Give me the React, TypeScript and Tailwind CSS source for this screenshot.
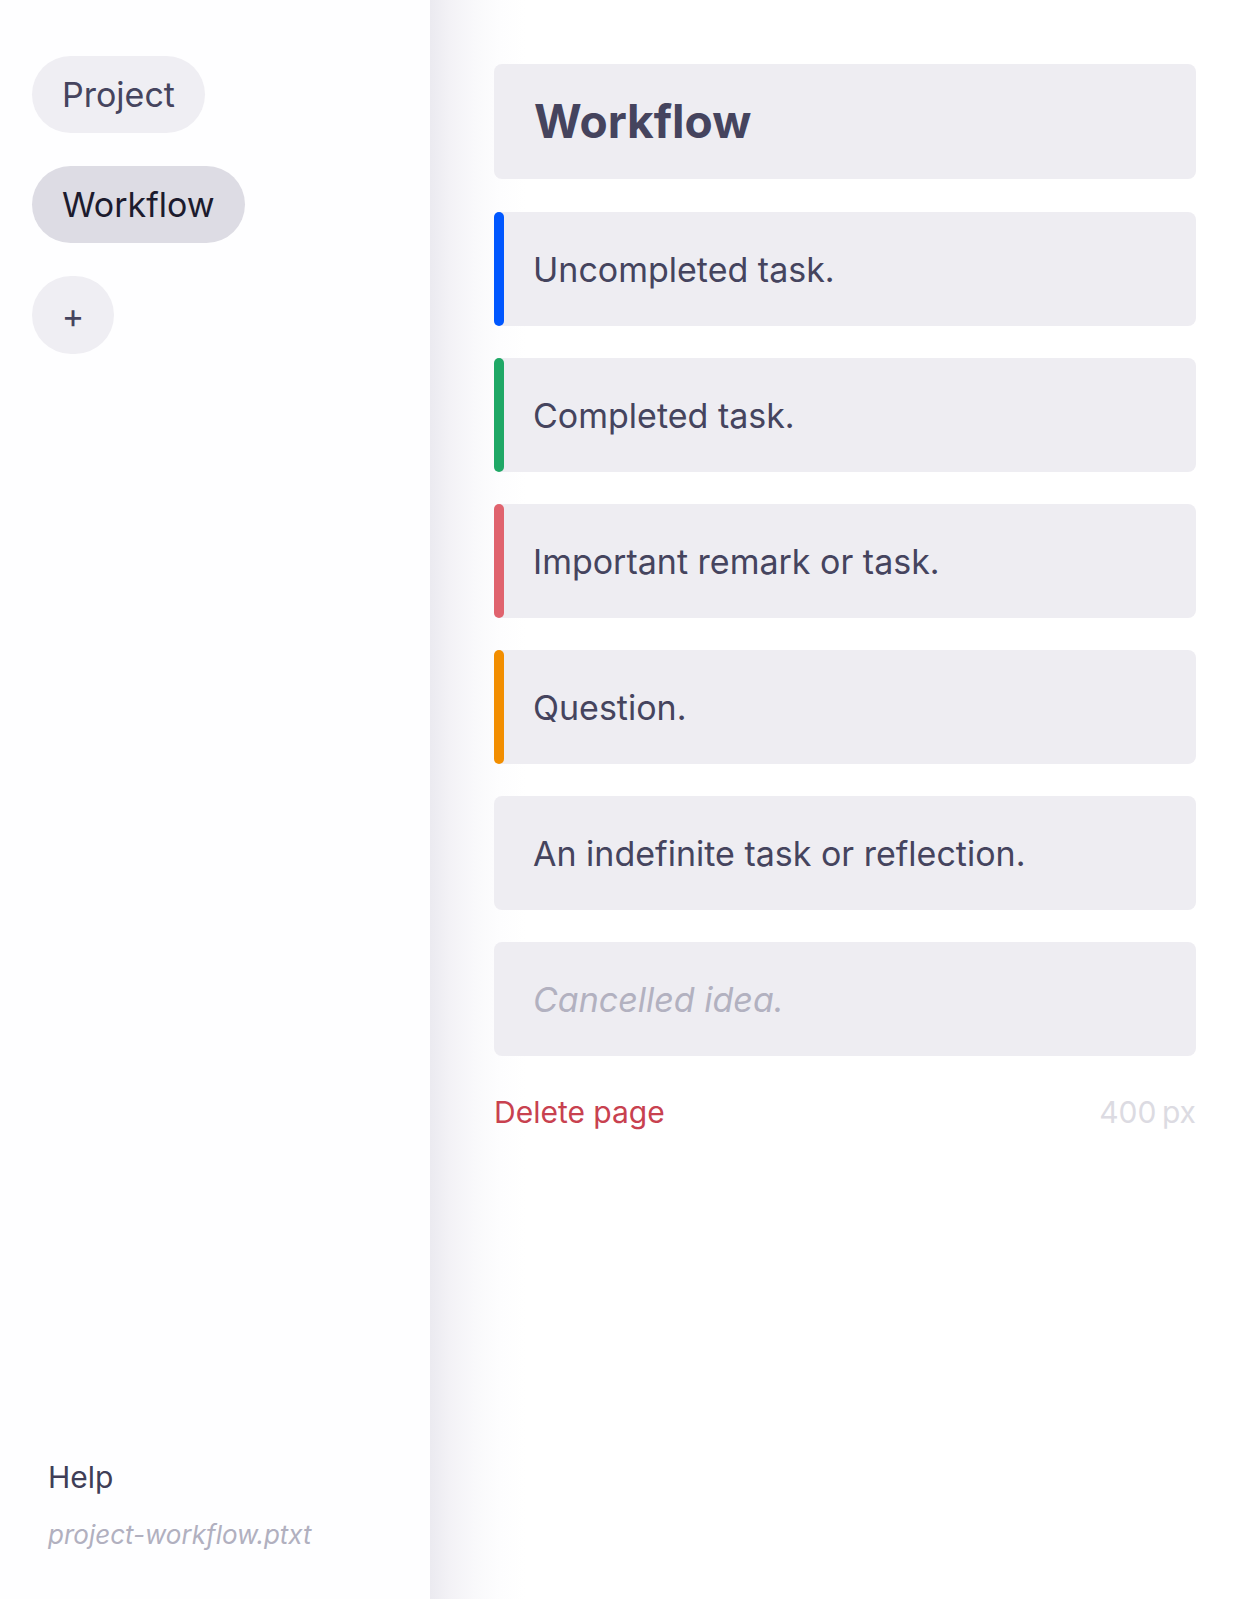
import React from "react";

const tasks = [
  { text: "Uncompleted task.", bar: "bg-[#0057ff]" },
  { text: "Completed task.", bar: "bg-[#1fa866]" },
  { text: "Important remark or task.", bar: "bg-[#e0636e]" },
  { text: "Question.", bar: "bg-[#f28e00]" },
  { text: "An indefinite task or reflection.", bar: "" },
];

export default function App() {
  return (
    <div
      className="flex h-[1599px] w-[1260px] bg-white"
      style={{ fontFamily: "Inter, 'Noto Sans', sans-serif" }}
    >
      <aside className="flex w-[430px] flex-col justify-between bg-[#fefeff] px-8 pt-[56px] pb-[47px]">
        <div className="flex flex-col items-start gap-[33px]">
          <div className="flex h-[77px] items-center rounded-full bg-[#efeef3] px-[30px] text-[34px] text-[#45445e]">
            Project
          </div>
          <div className="flex h-[77px] items-center rounded-full bg-[#dddce4] px-[30px] text-[34px] text-[#1c1b2e]">
            Workflow
          </div>
          <div className="flex h-[78px] w-[82px] items-center justify-center rounded-full bg-[#efeef3] text-[34px] text-[#45445e]">
            +
          </div>
        </div>
        <div className="flex flex-col gap-[21px] pl-4">
          <div className="text-[30px] leading-[40px] text-[#3f3e57]">Help</div>
          <div className="text-[26px] italic leading-[34px] text-[#b1b0bf]">project-workflow.ptxt</div>
        </div>
      </aside>
      <main className="flex-1 bg-[linear-gradient(to_right,#ebeaf0,#f3f2f6_20px,#f9f9fb_45px,#fdfdfe_70px,#ffffff_95px)] pl-16 pt-16">
        <div className="flex w-[702px] flex-col gap-[32px]">
          <div className="mb-px flex h-[115px] items-center rounded-lg bg-[#eeedf2] pl-[40px] text-[46px] font-bold text-[#45445e]">
            Workflow
          </div>
          {tasks.map((t) => (
            <div
              key={t.text}
              className="relative flex h-[114px] items-center rounded-lg bg-[#eeedf2] pl-[39px] text-[34px] text-[#45445e]"
            >
              {t.bar && (
                <div className={`absolute left-0 top-0 h-full w-[10px] rounded-[5px] ${t.bar}`} />
              )}
              {t.text}
            </div>
          ))}
          <div className="flex h-[114px] items-center rounded-lg bg-[#eeedf2] pl-[39px] text-[34px] italic text-[#b2b1c0]">
            Cancelled idea.
          </div>
          <div className="mt-[4px] flex items-center justify-between text-[30px] leading-[40px]">
            <span className="text-[#c8414f]">Delete page</span>
            <span className="text-[#dcdbe2]">400&#8201;px</span>
          </div>
        </div>
      </main>
    </div>
  );
}
